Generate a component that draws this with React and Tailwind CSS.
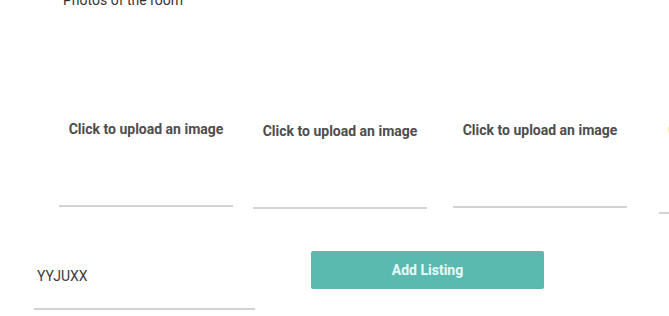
export default function App() {
  const boxes = [
    { ml: "ml-0", mt: "mt-0" },
    { ml: "ml-[20px]", mt: "mt-[2px]" },
    { ml: "ml-[26px]", mt: "mt-[1px]" },
  ];
  return (
    <div className="w-[669px] h-[316px] overflow-hidden bg-white font-['Roboto',sans-serif]">
      <div className="pl-[63px] mt-[-8px] text-[14px] leading-[16px] text-[#333]">
        Photos of the room
      </div>
      <div className="flex items-start pl-[59px] mt-[45px] w-[900px]">
        {boxes.map((b, i) => (
          <div
            key={i}
            className={`${b.ml} ${b.mt} w-[174px] h-[154px] shrink-0 flex items-center justify-center border-b-2 border-[#d3d3d3]`}
          >
            <span className="mt-[1px] text-[14px] font-bold text-[#4d4d4d]">Click to upload an image</span>
          </div>
        ))}
        <div className="ml-[32px] mt-[7px] w-[174px] h-[154px] shrink-0 flex items-center border-b-2 border-[#d3d3d3]">
          <span className="ml-[9px] mt-[-12px] text-[14px] font-bold text-[#f7cf7a]">Click to upload</span>
        </div>
      </div>
      <div className="flex items-start pl-[34px] mt-[37px]">
        <div className="mt-[1px] w-[221px] h-[58px] flex items-end border-b-2 border-[#d3d3d3]">
          <span className="pl-[3px] pb-[24px] text-[14px] leading-[16px] text-[#3a3a3a]">YYJUXX</span>
        </div>
        <button className="ml-[56px] w-[233px] h-[38px] rounded-[2px] bg-[#5bbab0] text-[#eafaf8] text-[14px] font-bold">
          Add Listing
        </button>
      </div>
    </div>
  );
}
